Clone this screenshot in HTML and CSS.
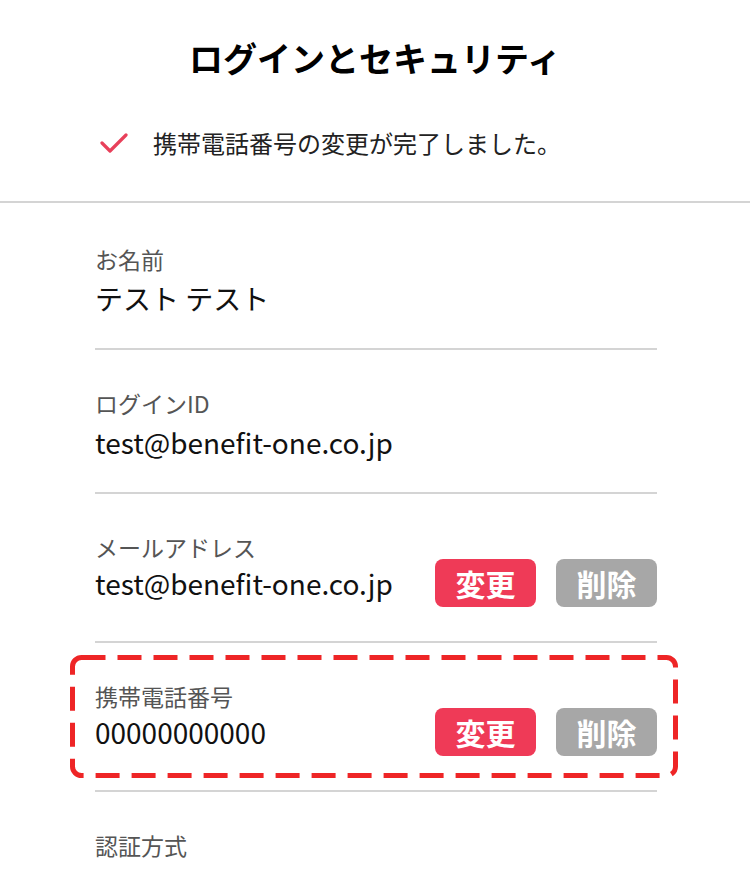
FILE: index.html
```html
<!DOCTYPE html>
<html lang="ja">
<head>
  <meta charset="UTF-8">
  <title>ログインとセキュリティ</title>
  <link rel="stylesheet" href="styles.css">
</head>
<body>

<header class="page-head">
  <h1>ログインとセキュリティ</h1>
  <p class="notice">
    <svg class="notice-icon" width="28" height="20" viewBox="0 0 28 20">
      <polyline points="2,10 10,18 26,2" fill="none" stroke="#e8405a" stroke-width="3.2" stroke-linecap="round" stroke-linejoin="round"/>
    </svg>
    <span>携帯電話番号の変更が完了しました。</span>
  </p>
</header>

<main class="settings">

  <div class="setting">
    <div class="setting-label">お名前</div>
    <div class="setting-row">
      <span class="setting-value">テスト テスト</span>
    </div>
  </div>

  <div class="setting">
    <div class="setting-label">ログインID</div>
    <div class="setting-row">
      <span class="setting-value">test@benefit-one.co.jp</span>
    </div>
  </div>

  <div class="setting">
    <div class="setting-label">メールアドレス</div>
    <div class="setting-row has-actions">
      <span class="setting-value">test@benefit-one.co.jp</span>
      <div class="actions">
        <button class="btn btn-change">変更</button>
        <button class="btn btn-delete">削除</button>
      </div>
    </div>
  </div>

  <div class="setting is-highlighted">
    <svg class="highlight" width="608" height="123" viewBox="0 0 608 123">
      <rect x="2.5" y="2.5" width="603" height="118" rx="9" fill="none" stroke="#ee2526" stroke-width="5" stroke-dasharray="24 12"/>
    </svg>
    <div class="setting-label">携帯電話番号</div>
    <div class="setting-row has-actions">
      <span class="setting-value">00000000000</span>
      <div class="actions">
        <button class="btn btn-change">変更</button>
        <button class="btn btn-delete">削除</button>
      </div>
    </div>
  </div>

  <div class="setting">
    <div class="setting-label">認証方式</div>
  </div>

</main>

</body>
</html>
```

FILE: styles.css
```css
body {
  margin: 0;
  background-color: #fff;
  color: #111;
  font-family: "Noto Sans CJK JP", "Noto Sans", sans-serif;
}

.page-head {
  border-bottom: 2px solid #d4d4d4;
  padding: 34px 0 41px;
}

h1 {
  margin: 0;
  font-size: 34px;
  line-height: 48px;
  font-weight: bold;
  text-align: center;
  color: #000;
}

.notice {
  display: flex;
  align-items: center;
  gap: 25px;
  margin: 44px 0 0 100px;
  font-size: 24px;
  line-height: 34px;
  color: #222;
}

.notice-icon {
  flex-shrink: 0;
}

.settings {
  width: 562px;
  margin: 0 93px 0 95px;
  padding-top: 3px;
}

.setting {
  position: relative;
  padding: 38px 0 30px;
  border-bottom: 2px solid #d4d4d4;
}

.setting-label {
  font-size: 23px;
  line-height: 30px;
  color: #555;
}

.setting-row {
  display: flex;
  align-items: center;
  justify-content: space-between;
  min-height: 40px;
  margin-top: 4px;
}

.setting-row.has-actions {
  min-height: 48px;
  margin: -3px 0 4px;
}

.setting-value {
  font-size: 28px;
  line-height: 40px;
  color: #111;
}

.actions {
  display: flex;
  gap: 20px;
}

.btn {
  width: 101px;
  height: 48px;
  border: none;
  border-radius: 8px;
  font-family: inherit;
  font-size: 30px;
  font-weight: bold;
  color: #fff;
  padding: 0;
}

.btn-change {
  background-color: #ef3a57;
}

.btn-delete {
  background-color: #a7a7a7;
}

.highlight {
  position: absolute;
  top: 12px;
  left: -25px;
  pointer-events: none;
}
```
